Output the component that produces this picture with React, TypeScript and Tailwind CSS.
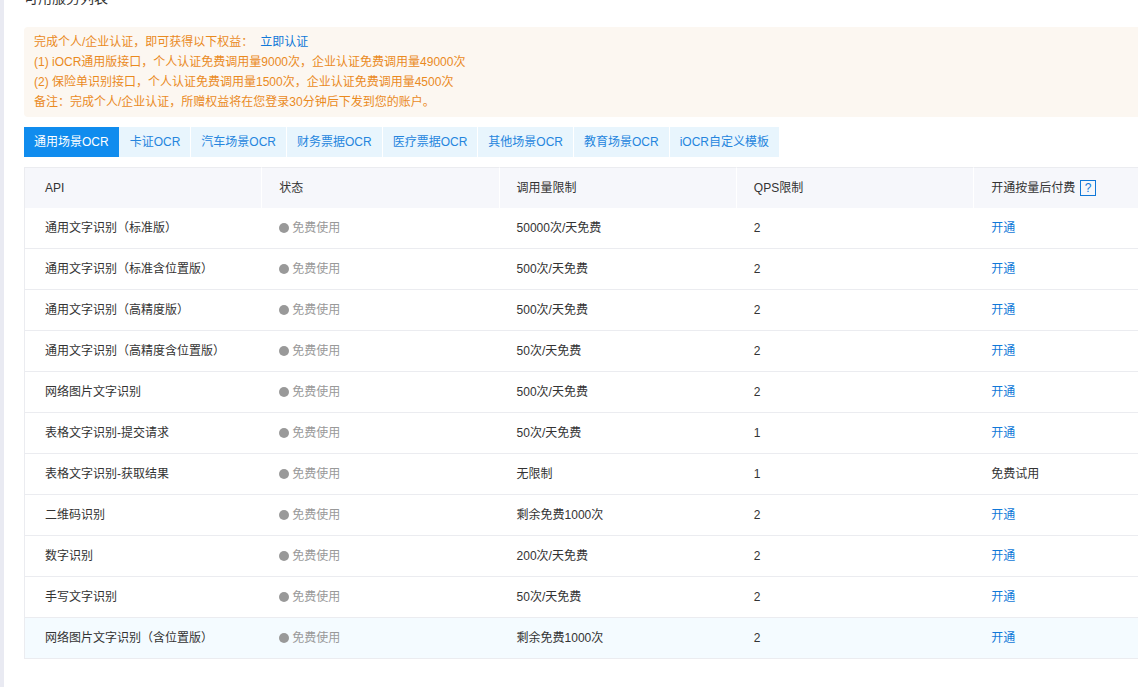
import { useState } from 'react';

const tabs = [
  '通用场景OCR',
  '卡证OCR',
  '汽车场景OCR',
  '财务票据OCR',
  '医疗票据OCR',
  '其他场景OCR',
  '教育场景OCR',
  'iOCR自定义模板',
];

type Service = { name: string; limit: string; qps: number; trial?: boolean };

const services: Service[] = [
  { name: '通用文字识别（标准版）', limit: '50000次/天免费', qps: 2 },
  { name: '通用文字识别（标准含位置版）', limit: '500次/天免费', qps: 2 },
  { name: '通用文字识别（高精度版）', limit: '500次/天免费', qps: 2 },
  { name: '通用文字识别（高精度含位置版）', limit: '50次/天免费', qps: 2 },
  { name: '网络图片文字识别', limit: '500次/天免费', qps: 2 },
  { name: '表格文字识别-提交请求', limit: '50次/天免费', qps: 1 },
  { name: '表格文字识别-获取结果', limit: '无限制', qps: 1, trial: true },
  { name: '二维码识别', limit: '剩余免费1000次', qps: 2 },
  { name: '数字识别', limit: '200次/天免费', qps: 2 },
  { name: '手写文字识别', limit: '50次/天免费', qps: 2 },
  { name: '网络图片文字识别（含位置版）', limit: '剩余免费1000次', qps: 2 },
];

function Notice() {
  return (
    <div className="rounded-l bg-[#fcf7f1] px-2.5 py-[5px] leading-5 text-[#ea8a1e]">
      <p>
        完成个人/企业认证，即可获得以下权益：
        <a href="#verify" className="ml-[7px] text-[#1078d8]">立即认证</a>
      </p>
      <p>(1) iOCR通用版接口，个人认证免费调用量9000次，企业认证免费调用量49000次</p>
      <p>(2) 保险单识别接口，个人认证免费调用量1500次，企业认证免费调用量4500次</p>
      <p>备注：完成个人/企业认证，所赠权益将在您登录30分钟后下发到您的账户。</p>
    </div>
  );
}

function Tabs() {
  const [active, setActive] = useState(0);
  return (
    <div className="mt-2.5 flex" role="tablist">
      {tabs.map((tab, i) => (
        <button
          key={tab}
          type="button"
          role="tab"
          aria-selected={i === active}
          onClick={() => setActive(i)}
          className={
            i === active
              ? 'h-[30px] border-r border-[#e8f5fd] bg-[#108cee] px-2.5 whitespace-nowrap text-white'
              : 'h-[30px] border-r border-white bg-[#e8f5fd] px-2.5 whitespace-nowrap text-[#2585dd]'
          }
        >
          {tab}
        </button>
      ))}
    </div>
  );
}

const headCell = 'border-t border-l border-t-[#ebecf0] border-l-white pl-[17px] font-normal';
const cell = 'h-[41px] border-b border-[#ebecf0] pl-[18px]';

function ServiceTable() {
  return (
    <table className="mt-2.5 w-full table-fixed border-separate border-spacing-0 text-left whitespace-nowrap text-[#333]">
      <colgroup>
        <col className="w-[21.3%]" />
        <col className="w-[21.3%]" />
        <col className="w-[21.3%]" />
        <col className="w-[21.3%]" />
        <col />
      </colgroup>
      <thead>
        <tr className="h-[41px] bg-[#f6f7fb]">
          <th className="border-t border-l border-[#ebecf0] pl-5 font-normal">API</th>
          <th className={headCell}>状态</th>
          <th className={headCell}>调用量限制</th>
          <th className={headCell}>QPS限制</th>
          <th className={headCell}>
            <span className="flex items-center gap-[5px]">
              开通按量后付费
              <button
                type="button"
                aria-label="付费说明"
                className="flex size-4 items-center justify-center border border-[#1078d8] leading-none text-[#1078d8]"
              >
                ?
              </button>
            </span>
          </th>
        </tr>
      </thead>
      <tbody>
        {services.map((s) => (
          <tr key={s.name} className="last:bg-[#f4fbff] hover:bg-[#f4fbff]">
            <td className="h-[41px] border-b border-l border-[#ebecf0] pl-5">{s.name}</td>
            <td className={cell}>
              <span className="flex items-center gap-[3px] text-[#999]">
                <span className="size-2.5 rounded-full bg-[#999]" />
                免费使用
              </span>
            </td>
            <td className={cell}>{s.limit}</td>
            <td className={cell}>{s.qps}</td>
            <td className={cell}>
              {s.trial ? '免费试用' : <a href="#activate" className="text-[#1078d8]">开通</a>}
            </td>
          </tr>
        ))}
      </tbody>
    </table>
  );
}

export default function App() {
  return (
    <main className="min-h-screen overflow-hidden border-l-4 border-[#e9eaf2] bg-white pl-5 font-['Liberation_Sans','Noto_Sans_CJK_SC',sans-serif] text-xs">
      <h1 className="-mt-3 mb-[19px] text-sm leading-5 text-[#333]">可用服务列表</h1>
      <Notice />
      <Tabs />
      <ServiceTable />
    </main>
  );
}
